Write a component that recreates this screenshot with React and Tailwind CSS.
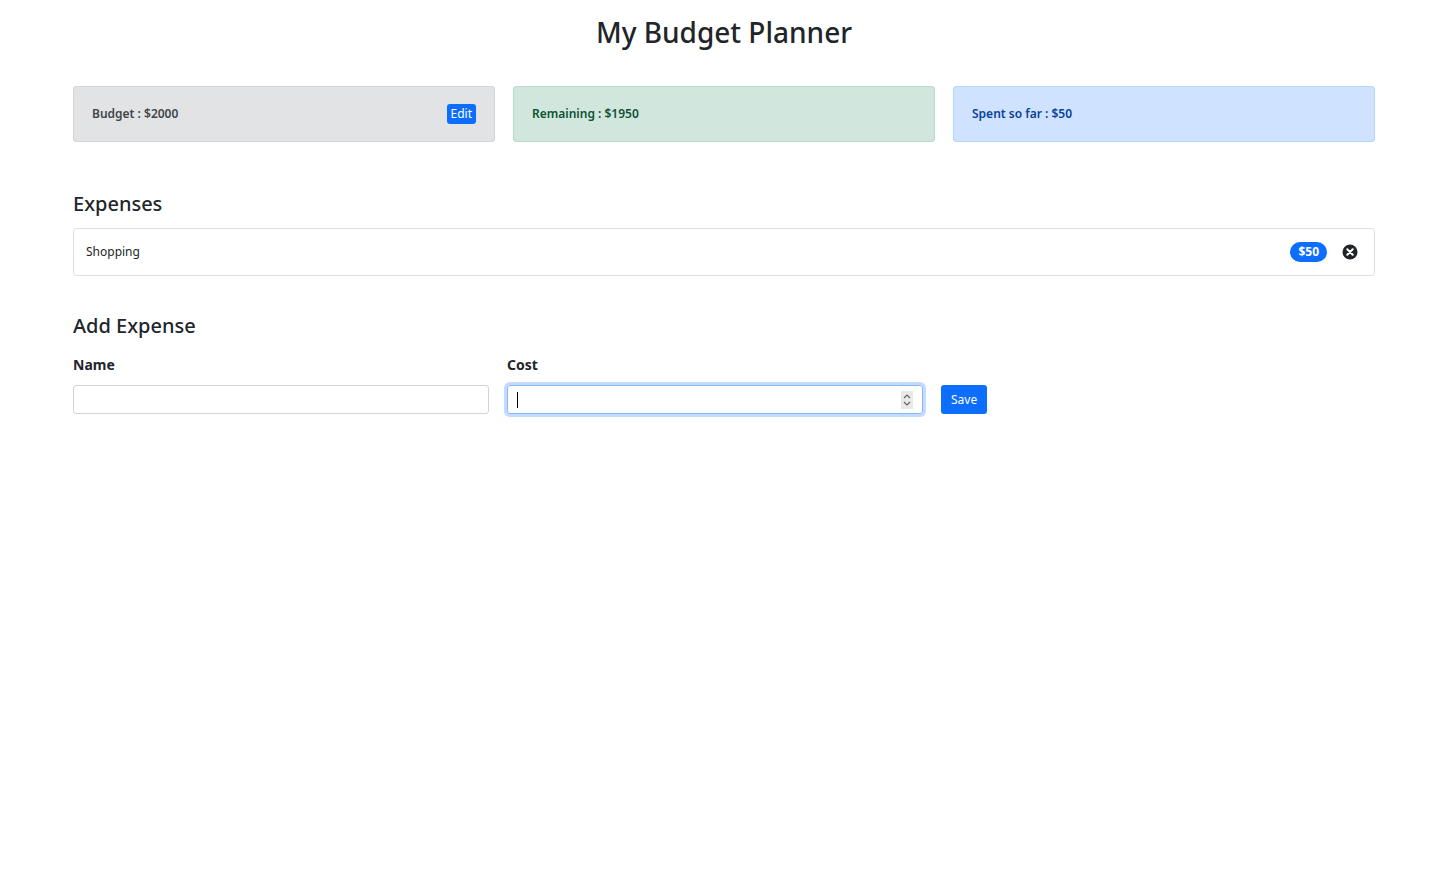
export default function App() {
  return (
    <div className="min-h-[886px] bg-white text-[#212529]" style={{ fontFamily: '"Noto Sans","Open Sans",sans-serif' }}>
      <div className="w-[1302px] mx-auto">
        <h1 className="text-center text-[28px] leading-none pt-[18px] h-[86px] font-medium">My Budget Planner</h1>
        <div className="grid grid-cols-3 gap-[18px]">
          <div className="h-[56px] bg-[#e2e3e5] border border-[#d3d6d8] rounded-[3px] flex items-center justify-between px-[18px] text-[12px] font-semibold text-[#41464b]">
            <span>Budget : $2000</span>
            <button className="bg-[#0d6efd] text-white font-normal rounded-[3px] px-[4px] h-[20px] leading-[20px]">Edit</button>
          </div>
          <div className="h-[56px] bg-[#d1e7dd] border border-[#badbcc] rounded-[3px] flex items-center px-[18px] text-[12px] font-semibold text-[#0f5132]">Remaining : $1950</div>
          <div className="h-[56px] bg-[#cfe2ff] border border-[#b6d4fe] rounded-[3px] flex items-center px-[18px] text-[12px] font-semibold text-[#084298]">Spent so far : $50</div>
        </div>
        <h3 className="text-[20px] font-medium mt-[48px] mb-[10px] leading-[28px]">Expenses</h3>
        <div className="h-[48px] border border-[#dee2e6] rounded-[3px] flex items-center justify-between pl-[12px] pr-[16px] text-[12px]">
          <span>Shopping</span>
          <div className="flex items-center gap-[15px]">
            <span className="bg-[#0d6efd] text-white font-bold rounded-full px-[8px] h-[20px] leading-[20px]">$50</span>
            <svg width="16" height="16" viewBox="0 0 16 16"><circle cx="8" cy="8" r="7.5" fill="#212529"/><path d="M5.3 5.3l5.4 5.4M10.7 5.3l-5.4 5.4" stroke="#fff" strokeWidth="2" strokeLinecap="round"/></svg>
          </div>
        </div>
        <h3 className="text-[20px] font-medium mt-[36px] mb-[14px] leading-[28px]">Add Expense</h3>
        <div className="flex items-end gap-[18px]">
          <div className="w-[416px]">
            <label className="block text-[14px] font-bold mb-[10px]">Name</label>
            <input className="w-full h-[29px] border border-[#ced4da] rounded-[3px] outline-none" />
          </div>
          <div className="w-[416px]">
            <label className="block text-[14px] font-bold mb-[10px]">Cost</label>
            <div className="w-full h-[29px] border border-[#86b7fe] rounded-[3px] ring-[3px] ring-[#c2dbfe] flex items-center justify-between px-[9px]">
              <span className="w-px h-[16px] bg-black"></span>
              <span className="w-[12px] h-[18px] bg-[#e9e9e9] flex flex-col items-center justify-center text-[#666]">
                <svg width="8" height="14" viewBox="0 0 8 14"><path d="M1 5l3-3 3 3M1 9l3 3 3-3" fill="none" stroke="#666" strokeWidth="1.2"/></svg>
              </span>
            </div>
          </div>
          <button className="h-[29px] px-[10px] bg-[#0d6efd] text-white text-[12px] rounded-[3px]">Save</button>
        </div>
      </div>
    </div>
  );
}
